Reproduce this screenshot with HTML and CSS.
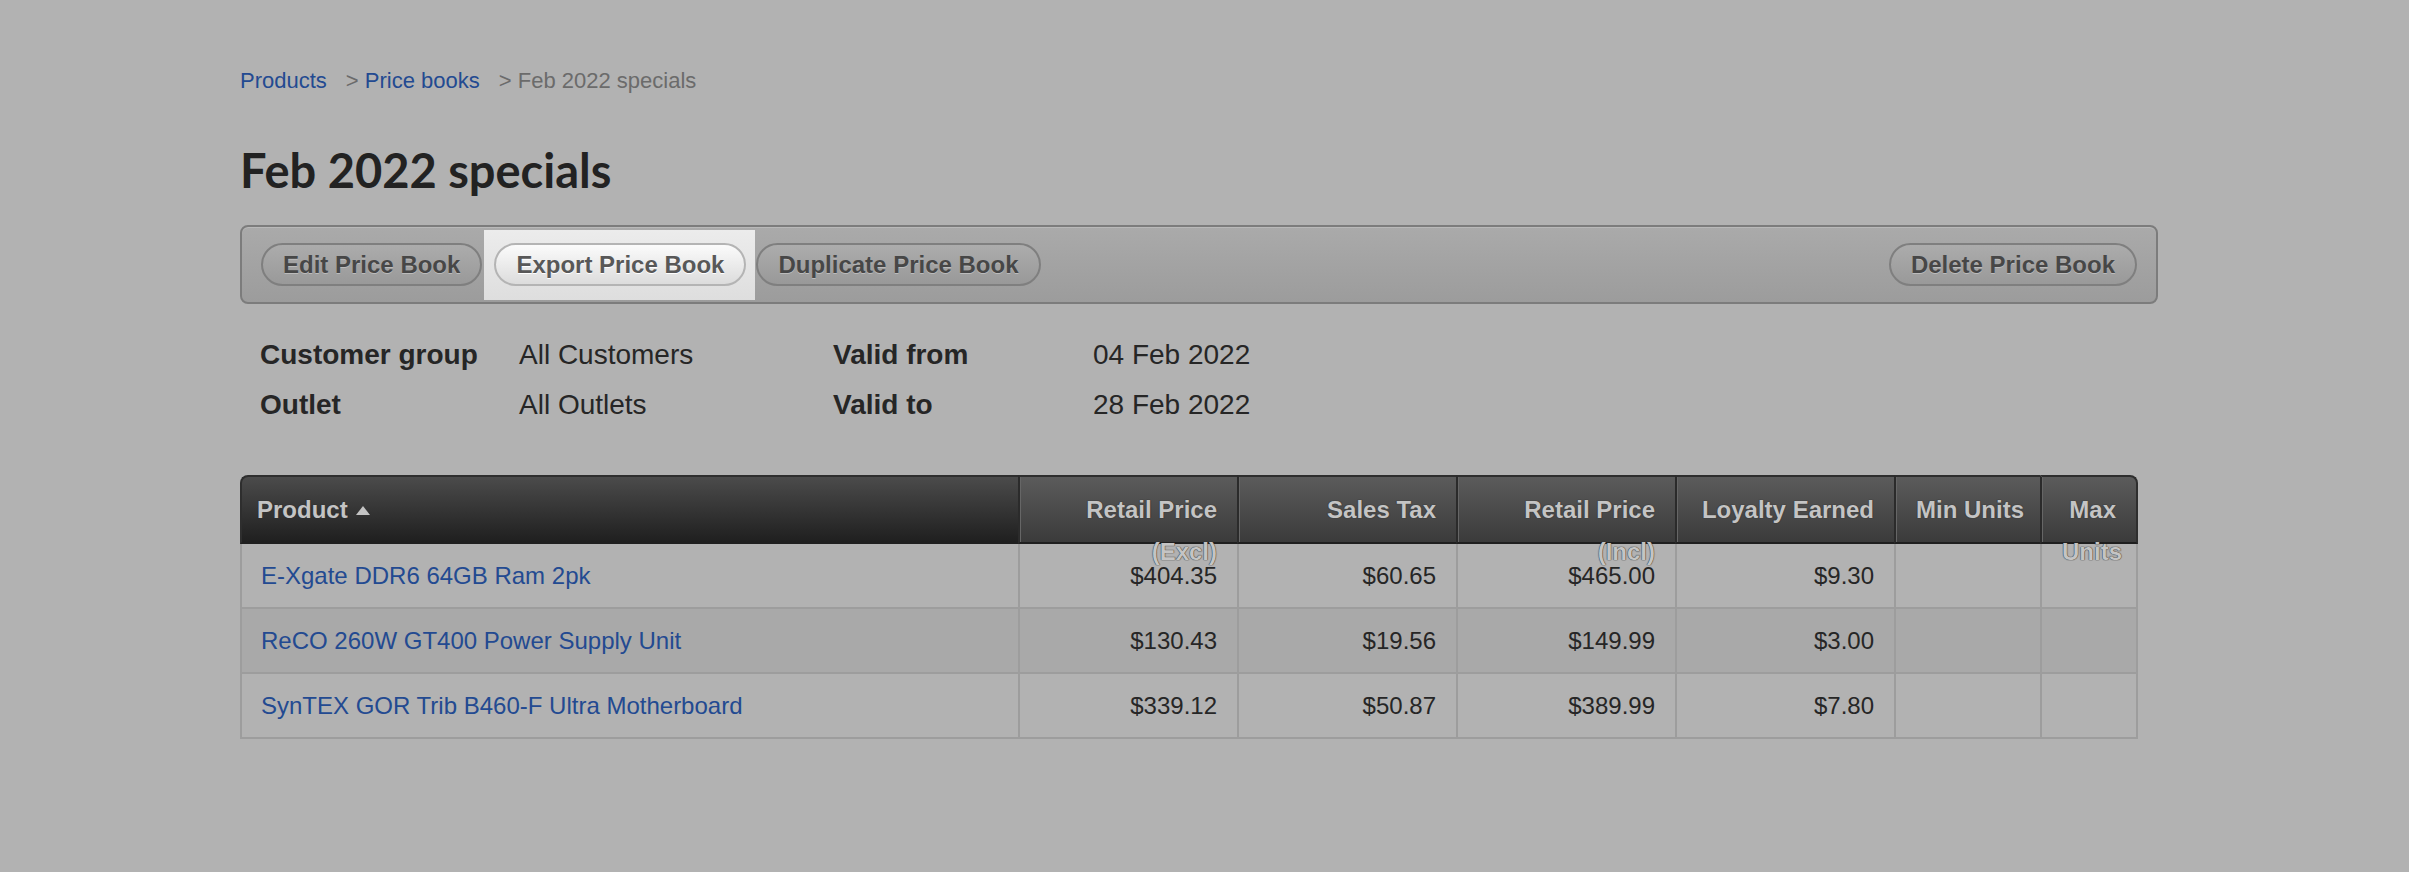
FILE: index.html
```html
<!DOCTYPE html>
<html lang="en">
<head>
    <meta charset="utf-8">
    <title>Feb 2022 specials</title>
    <link rel="stylesheet" href="styles.css">
</head>
<body>
<div class="page">
    <nav class="crumbs">
        <a href="#">Products</a><span class="crumb">&gt; <a href="#">Price books</a></span><span class="crumb current">&gt; Feb 2022 specials</span>
    </nav>

    <h1 class="title">Feb 2022 specials</h1>

    <div class="toolbar">
        <a class="btn btn-edit" href="#">Edit Price Book</a>
        <span class="spotlight">
            <a class="btn btn-light" href="#">Export Price Book</a>
        </span>
        <a class="btn btn-dup" href="#">Duplicate Price Book</a>
        <a class="btn btn-delete" href="#">Delete Price Book</a>
    </div>

    <div class="details">
        <div class="label">Customer group</div>
        <div class="value">All Customers</div>
        <div class="label">Valid from</div>
        <div class="value">04 Feb 2022</div>
        <div class="label">Outlet</div>
        <div class="value">All Outlets</div>
        <div class="label">Valid to</div>
        <div class="value">28 Feb 2022</div>
    </div>

    <table class="grid">
        <colgroup>
            <col class="c-product">
            <col class="c-money">
            <col class="c-money">
            <col class="c-money">
            <col class="c-money">
            <col class="c-min">
            <col class="c-max">
        </colgroup>
        <thead>
        <tr>
            <th class="sorted"><div class="th-label">Product<span class="sort-up"></span></div></th>
            <th><div class="th-label">Retail Price (Excl)</div></th>
            <th><div class="th-label">Sales Tax</div></th>
            <th><div class="th-label">Retail Price (Incl)</div></th>
            <th><div class="th-label">Loyalty Earned</div></th>
            <th><div class="th-label nowrap">Min Units</div></th>
            <th><div class="th-label">Max Units</div></th>
        </tr>
        </thead>
        <tbody>
        <tr>
            <td><a href="#">E-Xgate DDR6 64GB Ram 2pk</a></td>
            <td class="num">$404.35</td>
            <td class="num">$60.65</td>
            <td class="num">$465.00</td>
            <td class="num">$9.30</td>
            <td class="num"></td>
            <td class="num"></td>
        </tr>
        <tr class="alt">
            <td><a href="#">ReCO 260W GT400 Power Supply Unit</a></td>
            <td class="num">$130.43</td>
            <td class="num">$19.56</td>
            <td class="num">$149.99</td>
            <td class="num">$3.00</td>
            <td class="num"></td>
            <td class="num"></td>
        </tr>
        <tr>
            <td><a href="#">SynTEX GOR Trib B460-F Ultra Motherboard</a></td>
            <td class="num">$339.12</td>
            <td class="num">$50.87</td>
            <td class="num">$389.99</td>
            <td class="num">$7.80</td>
            <td class="num"></td>
            <td class="num"></td>
        </tr>
        </tbody>
    </table>
</div>
</body>
</html>
```

FILE: styles.css
```css
html, body {
    margin: 0;
    padding: 0;
}

body {
    background: #b2b2b2;
    font-family: "Liberation Sans", Arial, sans-serif;
    color: #262626;
}

a {
    color: #234a91;
    text-decoration: none;
}

.page {
    width: 1918px;
    padding: 68px 0 0 240px;
}

/* breadcrumb */
.crumbs {
    font-size: 22px;
    line-height: 26px;
    color: #6b6b6b;
}

.crumb {
    margin-left: 19px;
}

.title {
    margin: 53px 0 0 0;
    font-family: Lato, "Liberation Sans", sans-serif;
    font-weight: 700;
    font-size: 47px;
    line-height: 47px;
    color: #222222;
}

/* toolbar */
.toolbar {
    margin-top: 31px;
    height: 75px;
    display: flex;
    align-items: center;
    padding: 0 19px;
    border: 2px solid #7c7c7c;
    border-radius: 8px;
    background: linear-gradient(#aaaaaa, #9c9c9c);
    box-shadow: inset 0 1px 0 #b9b9b9;
}

.btn {
    display: inline-block;
    height: 39px;
    line-height: 39px;
    padding: 0 20px;
    border: 2px solid #7f7f7f;
    border-radius: 22px;
    background: linear-gradient(#acacac, #999999);
    color: #474747;
    font-size: 24px;
    font-weight: 700;
    white-space: nowrap;
    text-shadow: 0 1px 0 #bcbcbc;
}

.btn-edit {
    margin-right: 2px;
}

.btn-dup {
    margin-left: 1px;
}

.btn-delete {
    margin-left: auto;
}

.spotlight {
    display: flex;
    align-items: center;
    height: 70px;
    padding: 0 9px 0 10px;
    background: linear-gradient(#ececec, #dedede);
}

.btn-light {
    border-color: #b4b4b4;
    background: linear-gradient(#fbfbfb, #dcdcdc);
    color: #585858;
    text-shadow: 0 1px 0 #ffffff;
}

/* details */
.details {
    margin-top: 26px;
    padding-left: 20px;
    display: grid;
    grid-template-columns: 259px 314px 260px auto;
    font-size: 28px;
    line-height: 50px;
}

.details .label {
    font-weight: 700;
}

/* table */
.grid {
    margin-top: 45px;
    width: 1898px;
    table-layout: fixed;
    border-spacing: 0;
    font-size: 24px;
}

.c-product { width: 778px; }
.c-money { width: 219px; }
.c-min { width: 146px; }
.c-max { width: 98px; }

.grid th {
    height: 69px;
    box-sizing: border-box;
    padding: 12px 20px 0 20px;
    vertical-align: top;
    text-align: right;
    font-weight: 700;
    color: #c4c4c4;
    text-shadow: 0 0 1px #333333, 0 0 1px #333333;
    background: linear-gradient(#5b5b5b, #3b3b3b);
    border-top: 2px solid #2e2e2e;
    border-bottom: 2px solid #1f1f1f;
    border-left: 2px solid #2b2b2b;
    box-shadow: inset 1px 0 0 #666666;
}

.grid th.sorted {
    text-align: left;
    padding-left: 15px;
    border-left: 2px solid #2e2e2e;
    border-top-left-radius: 8px;
    box-shadow: none;
    background: linear-gradient(#4b4b4b, #1f1f1f);
}

.grid th:last-child {
    border-right: 2px solid #2e2e2e;
    border-top-right-radius: 8px;
}

.th-label {
    height: 42px;
    line-height: 42px;
}

.nowrap {
    white-space: nowrap;
}

.sort-up {
    display: inline-block;
    margin-left: 8px;
    vertical-align: 3px;
    border-left: 7px solid transparent;
    border-right: 7px solid transparent;
    border-bottom: 9px solid #c4c4c4;
}

.grid td {
    padding: 18px 20px 17px 19px;
    line-height: 28px;
    border-left: 2px solid #9d9d9d;
    border-bottom: 2px solid #9d9d9d;
    white-space: nowrap;
    overflow: hidden;
}

.grid td:last-child {
    border-right: 2px solid #9d9d9d;
}

.grid td.num {
    text-align: right;
    color: #262626;
}

.grid tr.alt td {
    background: #a9a9a9;
}
```
